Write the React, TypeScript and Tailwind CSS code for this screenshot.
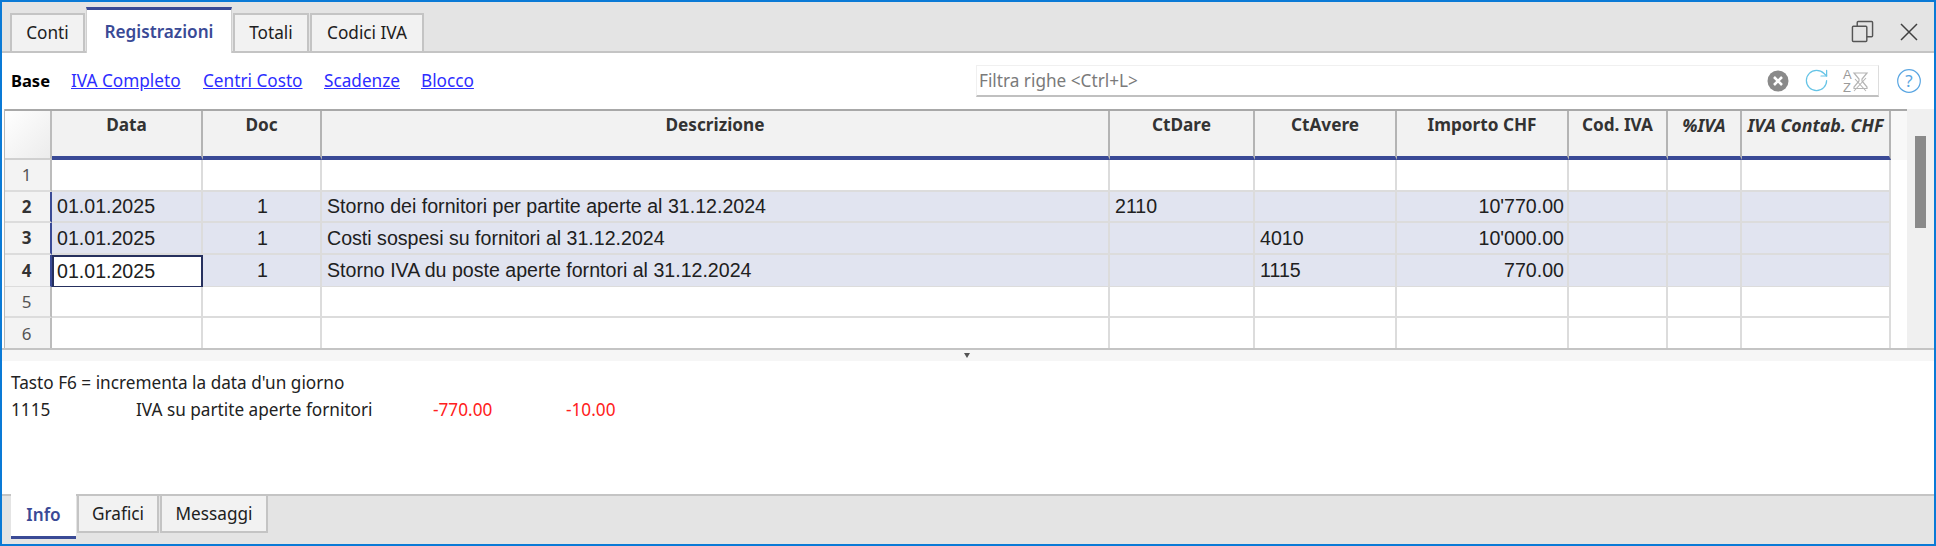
import { RotateCw } from "lucide-react";

const uiFont = "font-['Noto_Sans',sans-serif]";
const gridCols =
  "grid grid-cols-[47px_151px_119px_788px_145px_142px_172px_99px_74px_149px]";

const topTabs = [
  { label: "Conti", w: "w-[75px]" },
  { label: "Registrazioni", w: "w-[146px]", active: true },
  { label: "Totali", w: "w-[76px]" },
  { label: "Codici IVA", w: "w-[114px]" },
];

const subLinks = [
  { label: "IVA Completo", w: "w-[132px]" },
  { label: "Centri Costo", w: "w-[121px]" },
  { label: "Scadenze", w: "w-[97px]" },
  { label: "Blocco", w: "w-[60px]" },
];

const columns = ["Data", "Doc", "Descrizione", "CtDare", "CtAvere", "Importo CHF", "Cod. IVA", "%IVA", "IVA Contab. CHF"];

const rows = [
  { n: 1, cells: [] as string[] },
  { n: 2, sel: true, cells: ["01.01.2025", "1", "Storno dei fornitori per partite aperte al 31.12.2024", "2110", "", "10'770.00"] },
  { n: 3, sel: true, cells: ["01.01.2025", "1", "Costi sospesi su fornitori al 31.12.2024", "", "4010", "10'000.00"] },
  { n: 4, sel: true, cells: ["01.01.2025", "1", "Storno IVA du poste aperte forntori al 31.12.2024", "", "1115", "770.00"] },
  { n: 5, cells: [] as string[] },
  { n: 6, cells: [] as string[] },
];

function cellAlign(col: number) {
  if (col === 1) return "justify-center pl-[2px]";
  if (col === 5) return "justify-end pr-[3px]";
  return "justify-start pl-[5px]";
}

function SortFilterIcon() {
  return (
    <svg width="24" height="26" viewBox="0 0 24 26" fill="none" className="shrink-0 overflow-visible">
      <text x="-1" y="11" fontSize="13" fill="#9a9a9a" fontFamily="Liberation Sans">A</text>
      <text x="-1" y="24" fontSize="13" fill="#9a9a9a" fontFamily="Liberation Sans">Z</text>
      <path d="M10 5h13l-5 6v2l5 6v1.5H10V19l5-6v-2z" stroke="#b4b4b4" strokeWidth="1.2" />
      <path d="M10 23 22 10M11 11l11 12" stroke="#b4b4b4" strokeWidth="1.1" />
    </svg>
  );
}

export default function App() {
  return (
    <div className={`w-screen h-screen flex flex-col overflow-hidden bg-white border-2 border-[#0a7ad6] text-[#202020] ${uiFont}`}>
      {/* Top tabs */}
      <div className="h-[51px] shrink-0 flex items-end justify-between bg-[#e4e4e4] border-b-2 border-[#c4c4c4] pl-[8px] pr-[16px]">
        <div className="flex items-end gap-[1px] text-[17.2px]">
          {topTabs.map((t) =>
            t.active ? (
              <div
                key={t.label}
                className={`${t.w} h-[46px] -mb-[2px] bg-white border-t-[3px] border-[#3a4a96] border-x border-x-[#d0d0d0] flex items-center justify-center font-semibold text-[#3a4a96]`}
              >
                {t.label}
              </div>
            ) : (
              <div
                key={t.label}
                className={`${t.w} h-[38px] bg-[#f2f2f2] border-2 border-[#c4c4c4] border-b-0 flex items-center justify-center`}
              >
                {t.label}
              </div>
            ),
          )}
        </div>
        <div className="flex items-center gap-[26px] pb-[8px]">
          <svg width="23" height="23" viewBox="0 0 24 24" fill="none" stroke="#555555" strokeWidth="1.5">
            <rect x="1.5" y="6.5" width="15" height="16" rx="1" />
            <path d="M6.5 6.5V2.5a1 1 0 0 1 1-1h14a1 1 0 0 1 1 1v14a1 1 0 0 1-1 1h-5" />
          </svg>
          <svg width="18" height="18" viewBox="0 0 18 18" fill="none" stroke="#404040" strokeWidth="1.5">
            <path d="M1 1l16 16M17 1 1 17" />
          </svg>
        </div>
      </div>

      {/* Sub views and filter */}
      <div className="h-[56px] shrink-0 flex items-center pl-[9px] pr-[13px] text-[17.2px]">
        <span className="w-[60px] font-bold text-black text-[16.5px]">Base</span>
        {subLinks.map((l) => (
          <span key={l.label} className={`${l.w} text-[#2d2dff] underline`}>
            {l.label}
          </span>
        ))}
        <div className="ml-auto flex items-center gap-[18px]">
          <div className="w-[903px] h-[32px] flex items-center bg-white border border-[#f0f0f0] border-b-2 border-b-[#c0c0c0] border-r-[#dddddd] pl-[2px] pr-[10px]">
            <span className="flex-1 text-[#7a7a7a]">Filtra righe &lt;Ctrl+L&gt;</span>
            <div className="flex items-center gap-[14px]">
              <svg width="22" height="22" viewBox="0 0 22 22">
                <circle cx="11" cy="11" r="10.5" fill="#8a8a8a" />
                <path d="M7 7l8 8M15 7l-8 8" stroke="#ffffff" strokeWidth="2.6" />
              </svg>
              <RotateCw size={27} strokeWidth={1.1} color="#66c4e6" />
              <SortFilterIcon />
            </div>
          </div>
          <svg width="24" height="24" viewBox="0 0 24 24" fill="none">
            <circle cx="12" cy="12" r="11.3" stroke="#5aa6e2" strokeWidth="1.2" />
            <text x="12" y="18" textAnchor="middle" fontSize="17" fill="#5aa6e2" fontFamily="Noto Sans">?</text>
          </svg>
        </div>
      </div>

      {/* Table */}
      <div className="h-[241px] shrink-0 flex pl-[2px] border-b-2 border-[#c4c4c4] overflow-hidden">
        <div className="w-[1904px] border-l border-[#b8b8b8] font-['Liberation_Sans',sans-serif] text-[19.6px]">
          <div className={`${gridCols} h-[51px] bg-[#f8f8f8] border-t-2 border-[#a8a8a8] ${uiFont}`}>
            <div className="bg-gradient-to-br from-white to-[#ececec] border-r-2 border-[#bcbcbc] border-b-2 border-b-[#d0d0d0]" />
            {columns.map((c, i) => (
              <div
                key={c}
                className={`bg-[#f2f2f2] border-r-2 border-[#b4b4b4] border-b-[4px] border-b-[#3a4a96] flex justify-center pt-[1px] font-bold text-[#333333] whitespace-nowrap ${
                  i >= 7 ? "italic text-[17.8px]" : "text-[17.2px]"
                }`}
              >
                {c}
              </div>
            ))}
          </div>
          {rows.map((r) => (
            <div key={r.n} className={`${gridCols} h-[31.7px]`}>
              <div
                className={`bg-[#f3f3f3] border-b-2 border-[#dcdcdc] flex items-center justify-center pr-[2px] ${uiFont} text-[17px] ${
                  r.sel ? "font-bold text-[#333333] border-r-2 border-r-[#3a4a96]" : "text-[#555555] border-r-2 border-r-[#bcbcbc]"
                }`}
              >
                {r.n}
              </div>
              {columns.map((c, col) => {
                const focused = r.n === 4 && col === 0;
                return (
                  <div
                    key={c}
                    className={`flex items-center whitespace-nowrap border-r-2 border-b-2 border-[#dcdcdc] ${cellAlign(col)} ${
                      r.sel ? "bg-[#e1e4f0]" : "bg-white"
                    } ${focused ? "!bg-white !border-2 !border-[#26305e] !pl-[3px]" : ""}`}
                  >
                    {r.cells[col]}
                  </div>
                );
              })}
            </div>
          ))}
        </div>
        <div className="flex-1 ml-[-1px] bg-[#f0f0f0] flex justify-center pt-[27px]">
          <div className="w-[11px] h-[92px] bg-[#8a8a8a]" />
        </div>
      </div>

      {/* Splitter */}
      <div className="h-[11px] shrink-0 bg-[#f6f6f6] flex justify-center pr-[2px] pt-[3px]">
        <svg width="6" height="5" viewBox="0 0 6 5">
          <path d="M0 0h6L3 5z" fill="#555555" />
        </svg>
      </div>

      {/* Info panel */}
      <div className="flex-1 pl-[9px] pt-[8px] text-[17.2px] text-[#222222]">
        <div className="h-[27px] flex items-center">Tasto F6 = incrementa la data d'un giorno</div>
        <div className="h-[27px] flex items-center">
          <span className="w-[125px]">1115</span>
          <span className="w-[297px]">IVA su partite aperte fornitori</span>
          <span className="w-[133px] text-[#ff2020]">-770.00</span>
          <span className="text-[#ff2020]">-10.00</span>
        </div>
      </div>

      {/* Bottom tabs */}
      <div className="h-[50px] shrink-0 flex items-start gap-[1px] bg-[#e4e4e4] border-t-2 border-[#c4c4c4] pl-[9px] text-[17.2px]">
        <div className="w-[65px] h-[45px] -mt-[2px] bg-white border-b-[3px] border-[#3a4a96] flex items-center justify-center font-semibold text-[#3a4a96]">
          Info
        </div>
        <div className="w-[82px] h-[37px] bg-[#f2f2f2] border-2 border-t-0 border-[#c4c4c4] flex items-center justify-center">
          Grafici
        </div>
        <div className="w-[108px] h-[37px] bg-[#f2f2f2] border-2 border-t-0 border-[#c4c4c4] flex items-center justify-center">
          Messaggi
        </div>
      </div>
    </div>
  );
}
